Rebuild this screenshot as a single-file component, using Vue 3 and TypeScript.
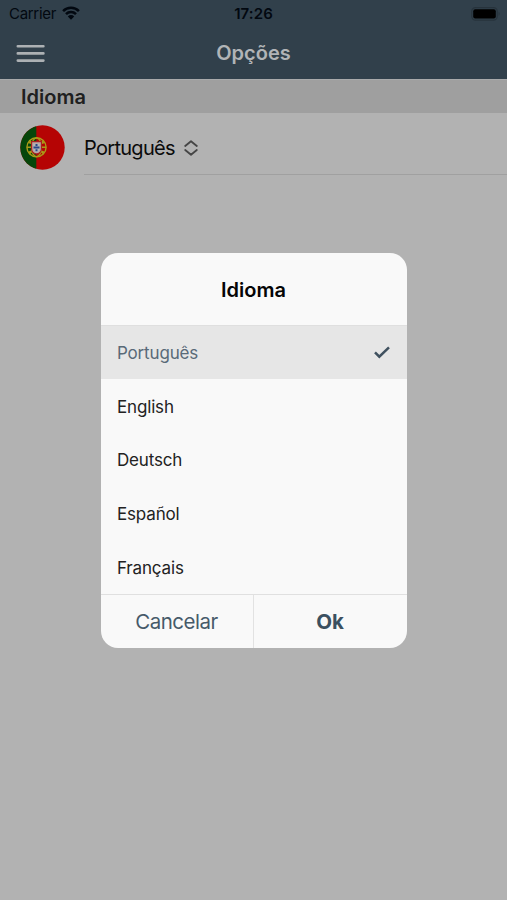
<script setup lang="ts">
import { ref } from 'vue'

const languages: string[] = ['Português', 'English', 'Deutsch', 'Español', 'Français']
const selected = ref<string>('Português')
</script>

<template>
  <div class="screen">
    <header class="header">
      <div class="status">
        <div class="carrier">
          <span>Carrier</span>
          <svg class="wifi" viewBox="0 0 18 14" width="18" height="14">
            <path d="M1.1 5.2a11 11 0 0 1 15.8 0M4 8.1a7 7 0 0 1 10 0" fill="none" stroke="#020810" stroke-width="2.5" />
            <path d="M9 13.8 5.8 10.4a4.6 4.6 0 0 1 6.4 0z" fill="#020810" />
          </svg>
        </div>
        <span class="time">17:26</span>
        <svg class="battery" viewBox="0 0 30 14" width="30" height="14">
          <rect x=".8" y=".6" width="25.4" height="12.6" rx="3.6" fill="none" stroke="#27333c" stroke-width="1.2" />
          <rect x="2.2" y="2.2" width="22.6" height="9.4" rx="2" fill="#000" />
          <path d="M27.6 4.8q2 2 0 4.2z" fill="#27333c" />
        </svg>
      </div>
      <div class="toolbar">
        <button class="menu" aria-label="Menu">
          <svg viewBox="0 0 29 19" width="29" height="19" stroke="#adb1b4" stroke-width="2.6" stroke-linecap="round">
            <path d="M1.8 2.2h25.6M1.8 9.4h25.6M1.8 16.6h25.6" />
          </svg>
        </button>
        <h1>Opções</h1>
        <span />
      </div>
    </header>

    <h2 class="section">Idioma</h2>
    <div class="item">
      <svg class="flag" viewBox="0 0 45 45" width="45" height="45">
        <defs><clipPath id="disc"><circle cx="22.5" cy="22.5" r="22.2" /></clipPath></defs>
        <g clip-path="url(#disc)">
          <rect width="45" height="45" fill="#b50404" />
          <rect width="16.3" height="45" fill="#06460a" />
        </g>
        <g fill="none" stroke="#aa9a18" stroke-width="1.4">
          <circle cx="16.5" cy="22.3" r="9.6" />
          <ellipse cx="16.5" cy="22.3" rx="5" ry="9.3" />
          <path d="M7 22.3h19M8.5 17.3q8 4 16 0M8.5 27.3q8-4 16 0M9.5 15.8l14 13M23.5 15.8l-14 13" />
        </g>
        <path d="M11.6 16.7h9.8v7.3a4.9 4.9 0 0 1-9.8 0z" fill="#b8a8a4" stroke="#aa2020" stroke-width="1.2" />
        <path d="M13.5 18.8h6v5a3 3 0 0 1-6 0z" fill="#b5b5b5" />
        <path d="M15.5 19h2v2h-2zM13.5 21.5h2v2h-2zM17.5 21.5h2v2h-2zM15.5 21.5h2v2h-2zM15.5 24.3h2v2h-2z" fill="#284587" />
      </svg>
      <div class="value">
        <span>Português</span>
        <svg viewBox="0 0 14 16" width="14" height="16" fill="none" stroke="#454545" stroke-width="1.8" stroke-linecap="round" stroke-linejoin="round">
          <path d="M1.2 6 7 1.2 12.8 6M1.2 10 7 14.8l5.8-4.8" />
        </svg>
      </div>
    </div>

    <div class="overlay">
      <section class="dialog" role="dialog">
        <h3>Idioma</h3>
        <ul>
          <li v-for="lang in languages" :key="lang" :class="{ active: lang === selected }" @click="selected = lang">
            <span>{{ lang }}</span>
            <svg v-if="lang === selected" viewBox="0 0 16 13" width="16" height="13" fill="none" stroke="#40515f" stroke-width="2.5">
              <path d="M1 6.3 5.3 10.7 15 1.4" />
            </svg>
          </li>
        </ul>
        <footer>
          <button class="cancel">Cancelar</button>
          <button class="ok">Ok</button>
        </footer>
      </section>
    </div>
  </div>
</template>

<style>
body { margin: 0; background: #b2b2b2; }
</style>

<style scoped>
* { box-sizing: border-box; }
.screen { height: 900px; overflow: hidden; background: #b2b2b2; color: #0b0b0b; font-family: Inter, "Liberation Sans", sans-serif; }
h1, h2, h3, ul { margin: 0; padding: 0; }
button { border: 0; padding: 0; background: none; font-family: inherit; }
.header { height: 79px; background: #31404b; }
.status { display: grid; grid-template-columns: 1fr auto 1fr; height: 27px; align-items: center; padding: 0 6px 0 9px; color: #020810; }
.carrier { display: flex; align-items: center; gap: 6px; font-size: 15px; line-height: 27px; letter-spacing: -.3px; }
.wifi { margin-top: -1px; }
.time { font-size: 15px; font-weight: 600; margin-left: -3px; letter-spacing: .1px; }
.battery { justify-self: end; }
.toolbar { display: grid; grid-template-columns: 1fr auto 1fr; align-items: center; height: 52px; padding: 0 16px; }
.menu { display: flex; width: 29px; }
h1 { font-size: 20px; line-height: 26px; font-weight: 600; color: #b1b4b7; }
.section { height: 34px; padding-left: 21px; background: #9f9f9f; border-top: 1px solid #a9aaab; font-size: 20px; line-height: 34px; font-weight: 600; color: #202020; }
.item { display: flex; height: 62px; padding-left: 20px; }
.flag { margin: 12px 19px 0 0; }
.value { flex: 1; display: flex; align-items: center; gap: 9.5px; padding-top: 8px; border-bottom: 1px solid #a0a0a0; font-size: 20px; letter-spacing: -.7px; }
.value span { padding-top: 1px; }
.overlay { position: absolute; inset: 0; height: 900px; display: flex; align-items: center; justify-content: center; }
.dialog { width: 306px; height: 395px; border-radius: 17px; background: #f9f9f9; overflow: hidden; }
h3 { height: 72px; line-height: 75px; text-align: center; font-size: 20px; font-weight: 600; color: #050505; }
ul { list-style: none; height: 270px; border-top: 1px solid #dfdfdf; border-bottom: 1px solid #e0e0e0; }
li { display: flex; align-items: center; justify-content: space-between; height: 53.7px; padding: 0 17px 0 16.5px; font-size: 17px; letter-spacing: -.17px; color: #222; }
li span { padding-top: 1.3px; }
li.active { background: #e6e6e6; color: #596a78; }
footer { display: grid; grid-template-columns: 153px 1fr; height: 53px; }
footer button { font-size: 20.5px; letter-spacing: -.5px; color: #465a69; padding-top: 1px; }
.cancel { border-right: 1px solid #e2e2e2; }
footer .ok { font-weight: 700; color: #3b5060; letter-spacing: -.2px; }
</style>
